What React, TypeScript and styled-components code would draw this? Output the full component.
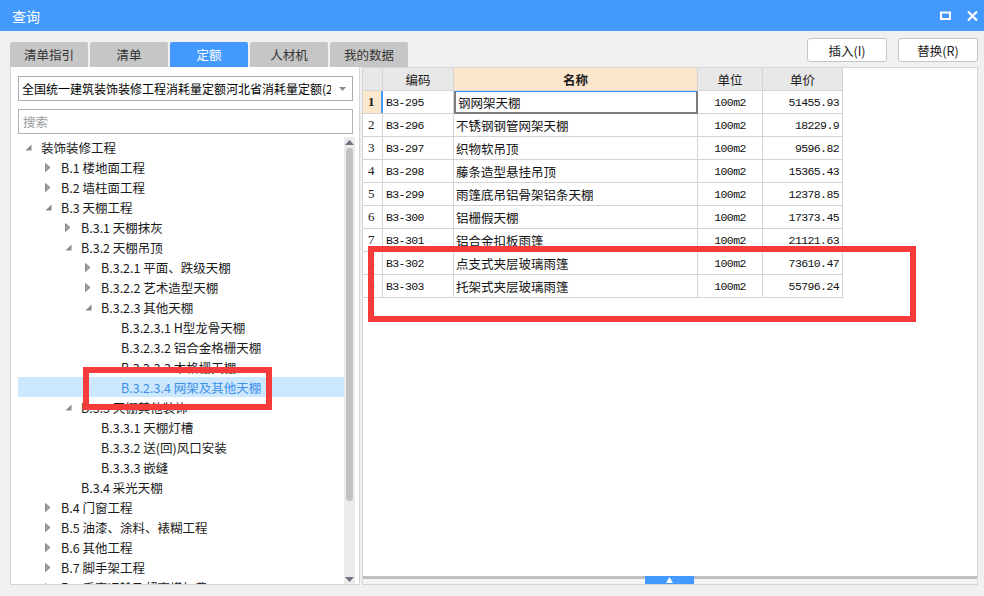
import React from 'react'
import styled, { createGlobalStyle } from 'styled-components'

const BLUE = '#4499ff'
const GRID = '#d4d4d4'
const UI_FONT = `'Noto Sans CJK SC', 'Noto Sans', sans-serif`
const CELL_FONT = `'Liberation Mono', 'Noto Sans CJK SC', monospace`

const GlobalStyle = createGlobalStyle`
  html, body {
    margin: 0;
    padding: 0;
    background: #f0f0f0;
  }
  * { box-sizing: border-box; }
`

const tabs = ['清单指引', '清单', '定额', '人材机', '我的数据']
const ACTIVE_TAB = 2

// level, label, state: 'open' | 'closed' | 'leaf'
const treeItems: [number, string, string][] = [
  [0, '装饰装修工程', 'open'],
  [1, 'B.1 楼地面工程', 'closed'],
  [1, 'B.2 墙柱面工程', 'closed'],
  [1, 'B.3 天棚工程', 'open'],
  [2, 'B.3.1 天棚抹灰', 'closed'],
  [2, 'B.3.2 天棚吊顶', 'open'],
  [3, 'B.3.2.1 平面、跌级天棚', 'closed'],
  [3, 'B.3.2.2 艺术造型天棚', 'closed'],
  [3, 'B.3.2.3 其他天棚', 'open'],
  [4, 'B.3.2.3.1 H型龙骨天棚', 'leaf'],
  [4, 'B.3.2.3.2 铝合金格栅天棚', 'leaf'],
  [4, 'B.3.2.3.3 木格栅天棚', 'leaf'],
  [4, 'B.3.2.3.4 网架及其他天棚', 'leaf'],
  [2, 'B.3.3 天棚其他装饰', 'open'],
  [3, 'B.3.3.1 天棚灯槽', 'leaf'],
  [3, 'B.3.3.2 送(回)风口安装', 'leaf'],
  [3, 'B.3.3.3 嵌缝', 'leaf'],
  [2, 'B.3.4 采光天棚', 'leaf'],
  [1, 'B.4 门窗工程', 'closed'],
  [1, 'B.5 油漆、涂料、裱糊工程', 'closed'],
  [1, 'B.6 其他工程', 'closed'],
  [1, 'B.7 脚手架工程', 'closed'],
  [1, 'B.8 垂直运输及超高增加费', 'closed'],
]
const SELECTED_TREE = 12

const rows = [
  ['B3-295', '钢网架天棚', '100m2', '51455.93'],
  ['B3-296', '不锈钢钢管网架天棚', '100m2', '18229.9'],
  ['B3-297', '织物软吊顶', '100m2', '9596.82'],
  ['B3-298', '藤条造型悬挂吊顶', '100m2', '15365.43'],
  ['B3-299', '雨篷底吊铝骨架铝条天棚', '100m2', '12378.85'],
  ['B3-300', '铝栅假天棚', '100m2', '17373.45'],
  ['B3-301', '铝合金扣板雨篷', '100m2', '21121.63'],
  ['B3-302', '点支式夹层玻璃雨篷', '100m2', '73610.47'],
  ['B3-303', '托架式夹层玻璃雨篷', '100m2', '55796.24'],
]

const COLS = '20px 71px 244px 65px 80px'

const Window = styled.div`
  position: relative;
  width: 984px;
  height: 596px;
  overflow: hidden;
  background: #f0f0f0;
  font-family: ${UI_FONT};
  font-size: 12px;
  color: #1a1a1a;
  display: flex;
  flex-direction: column;
`

const TitleBar = styled.div`
  height: 31px;
  flex: none;
  background: ${BLUE};
  color: #fff;
  display: flex;
  align-items: center;
  padding: 0 6px 0 12px;
  font-size: 14px;
`

const Title = styled.div`
  flex: 1;
`

const TitleIcons = styled.div`
  display: flex;
  align-items: center;
  gap: 16px;
`

const Body = styled.div`
  flex: none;
  height: 565px;
  display: flex;
  gap: 2px;
  padding: 0 6px 11px 10px;
`

const LeftColumn = styled.div`
  width: 350px;
  flex: none;
  display: flex;
  flex-direction: column;
  padding-top: 11px;
`

const TabRow = styled.div`
  display: flex;
  gap: 2px;
  height: 25px;
  flex: none;
  overflow: visible;
`

const Tab = styled.div<{ $active?: boolean }>`
  width: 78px;
  flex: none;
  display: flex;
  align-items: center;
  justify-content: center;
  border-radius: 2px 2px 0 0;
  background: ${p => (p.$active ? BLUE : '#c6c6c6')};
  color: ${p => (p.$active ? '#fff' : '#333')};
  font-size: 12.5px;
`

const LeftPanel = styled.div`
  flex: 1;
  background: #fff;
  border: 1px solid #d6d6d6;
  border-top: none;
  display: flex;
  flex-direction: column;
  min-height: 0;
`

const Fields = styled.div`
  padding: 9px 6px 0 7px;
  display: flex;
  flex-direction: column;
  gap: 8px;
`

const Select = styled.div`
  height: 25px;
  border: 1px solid #ababab;
  display: flex;
  align-items: center;
  padding: 0 6px 0 3px;
  gap: 8px;
  color: #000;
  font-size: 12px;
`

const SelectText = styled.div`
  flex: 1;
  white-space: nowrap;
  overflow: hidden;
`

const SearchBox = styled.div`
  height: 25px;
  border: 1px solid #b4b4b4;
  display: flex;
  align-items: center;
  padding: 0 4px;
  color: #9a9a9a;
  font-size: 12.5px;
`

const TreeArea = styled.div`
  flex: 1;
  display: flex;
  min-height: 0;
  padding: 3px 4px 0 7px;
`

const TreeList = styled.div`
  flex: 1;
  overflow: hidden;
`

const TreeRow = styled.div<{ $level: number; $selected?: boolean }>`
  height: 20px;
  display: flex;
  align-items: center;
  padding-left: ${p => 7 + p.$level * 20}px;
  background: ${p => (p.$selected ? '#cce8ff' : 'transparent')};
  color: ${p => (p.$selected ? '#3d8fe8' : '#1a1a1a')};
  white-space: nowrap;
  font-size: 12.5px;
`

const Toggle = styled.span`
  width: 16px;
  flex: none;
  display: flex;
  align-items: center;
`

const Scrollbar = styled.div`
  width: 11px;
  flex: none;
  background: #ececec;
  display: flex;
  flex-direction: column;
  align-items: center;
  padding: 3px 0 2px;
`

const ScrollThumb = styled.div`
  width: 7px;
  height: 353px;
  margin-top: 3px;
  border-radius: 4px;
  background: #c2c2c2;
`

const ScrollSpacer = styled.div`
  flex: 1;
`

const RightColumn = styled.div`
  flex: 1;
  display: flex;
  flex-direction: column;
  padding-top: 7px;
`

const ButtonRow = styled.div`
  height: 24px;
  flex: none;
  margin-bottom: 5px;
  display: flex;
  justify-content: flex-end;
  gap: 11px;
`

const Button = styled.div`
  width: 80px;
  border: 1px solid #c6c6c6;
  border-radius: 3px;
  background: #fff;
  display: flex;
  align-items: center;
  justify-content: center;
  color: #222;
  font-size: 12.5px;
`

const RightPanel = styled.div`
  flex: 1;
  background: #fff;
  border: 1px solid #d6d6d6;
  display: flex;
  flex-direction: column;
  min-height: 0;
`

const TableArea = styled.div`
  flex: 1;
`

const GridRow = styled.div`
  display: grid;
  grid-template-columns: ${COLS};
  width: 480px;
  height: 23px;
  border-bottom: 1px solid ${GRID};
`

const HeadCell = styled.div<{ $selected?: boolean }>`
  display: flex;
  align-items: center;
  justify-content: center;
  background: ${p => (p.$selected ? '#fde7cc' : '#e8e8e8')};
  font-weight: ${p => (p.$selected ? 'bold' : 'normal')};
  border-right: 1px solid ${GRID};
  font-size: 12.5px;
`

const RowHead = styled.div<{ $selected?: boolean }>`
  display: flex;
  align-items: center;
  padding-left: 5px;
  font-family: 'Liberation Serif', serif;
  font-size: 13px;
  background: ${p => (p.$selected ? '#fde7cc' : '#fff')};
  font-weight: ${p => (p.$selected ? 'bold' : 'normal')};
  border-right: ${p => (p.$selected ? `2px solid ${BLUE}` : `1px solid ${GRID}`)};
`

const Cell = styled.div<{ $align?: string; $focus?: boolean }>`
  display: flex;
  align-items: center;
  justify-content: ${p => p.$align || 'flex-start'};
  padding: 0 3px;
  font-family: ${CELL_FONT};
  font-size: 11.5px;
  letter-spacing: -0.6px;
  color: #111;
  white-space: nowrap;
  border-right: 1px solid ${GRID};
  ${p =>
    p.$focus &&
    `
    border: 2px solid #7c7c7c;
    border-top: 1px solid ${BLUE};
    margin-bottom: -1px;
  `}
`

const NameCell = styled(Cell)`
  font-family: ${UI_FONT};
  letter-spacing: 0;
  font-size: 12.5px;
  padding-left: 2px;
`

const BottomBar = styled.div`
  height: 8px;
  flex: none;
  border-top: 3px solid #c0c0c0;
  background: #f4f4f4;
  display: flex;
`

const SplitHandle = styled.div`
  width: 49px;
  height: 8px;
  margin: -3px 0 0 282px;
  background: ${BLUE};
  display: flex;
  align-items: center;
  justify-content: center;
`

// annotation marks drawn over the screenshot
const Mark = styled.div`
  position: absolute;
  border: 6px solid #f63b3b;
  pointer-events: none;
`

const Arrow = ({ state }: { state: string }) => {
  if (state === 'closed')
    return (
      <svg width="6" height="9" viewBox="0 0 6 9">
        <path d="M0.5 0.5 L5 4.5 L0.5 8.5 Z" fill="#a0a0a0" stroke="#7a7a7a" strokeWidth="0.8" />
      </svg>
    )
  if (state === 'open')
    return (
      <svg width="7" height="7" viewBox="0 0 7 7">
        <path d="M6.5 0.5 L6.5 6.5 L0.5 6.5 Z" fill="#8a8a8a" />
      </svg>
    )
  return null
}

const Caret = ({ up }: { up?: boolean }) => (
  <svg width="9" height="5" viewBox="0 0 9 5">
    <path d={up ? 'M0 5 L4.5 0 L9 5 Z' : 'M0 0 L9 0 L4.5 5 Z'} fill="#707080" />
  </svg>
)

export default function App() {
  return (
    <>
      <GlobalStyle />
      <Window>
        <TitleBar>
          <Title>查询</Title>
          <TitleIcons>
            <svg width="11" height="9" viewBox="0 0 11 9">
              <rect x="1" y="1.5" width="9" height="6.5" fill="none" stroke="#fff" strokeWidth="2" />
            </svg>
            <svg width="11" height="10" viewBox="0 0 11 10">
              <path d="M1 0.5 L10 9.5 M10 0.5 L1 9.5" stroke="#fff" strokeWidth="2.2" />
            </svg>
          </TitleIcons>
        </TitleBar>
        <Body>
          <LeftColumn>
            <TabRow>
              {tabs.map((t, i) => (
                <Tab key={t} $active={i === ACTIVE_TAB}>
                  {t}
                </Tab>
              ))}
            </TabRow>
            <LeftPanel>
              <Fields>
                <Select>
                  <SelectText>全国统一建筑装饰装修工程消耗量定额河北省消耗量定额(2012)</SelectText>
                  <svg width="7" height="4" viewBox="0 0 7 4">
                    <path d="M0 0 L7 0 L3.5 4 Z" fill="#8a8a8a" />
                  </svg>
                </Select>
                <SearchBox>搜索</SearchBox>
              </Fields>
              <TreeArea>
                <TreeList>
                  {treeItems.map(([level, label, state], i) => (
                    <TreeRow key={label} $level={level} $selected={i === SELECTED_TREE}>
                      <Toggle>
                        <Arrow state={state} />
                      </Toggle>
                      {label}
                    </TreeRow>
                  ))}
                </TreeList>
                <Scrollbar>
                  <Caret up />
                  <ScrollThumb />
                  <ScrollSpacer />
                  <Caret />
                </Scrollbar>
              </TreeArea>
            </LeftPanel>
          </LeftColumn>
          <RightColumn>
            <ButtonRow>
              <Button>插入(I)</Button>
              <Button>替换(R)</Button>
            </ButtonRow>
            <RightPanel>
              <TableArea>
                <GridRow>
                  <HeadCell />
                  <HeadCell>编码</HeadCell>
                  <HeadCell $selected>名称</HeadCell>
                  <HeadCell>单位</HeadCell>
                  <HeadCell>单价</HeadCell>
                </GridRow>
                {rows.map(([code, name, unit, price], i) => (
                  <GridRow key={code}>
                    <RowHead $selected={i === 0}>{i + 1}</RowHead>
                    <Cell>{code}</Cell>
                    <NameCell $focus={i === 0}>{name}</NameCell>
                    <Cell $align="center">{unit}</Cell>
                    <Cell $align="flex-end">{price}</Cell>
                  </GridRow>
                ))}
              </TableArea>
              <BottomBar>
                <SplitHandle>
                  <svg width="7" height="6" viewBox="0 0 7 6">
                    <path d="M0 6 L3.5 0 L7 6 Z" fill="#fff" />
                  </svg>
                </SplitHandle>
              </BottomBar>
            </RightPanel>
          </RightColumn>
        </Body>
        <Mark style={{ left: 83, top: 367, width: 189, height: 43 }} />
        <Mark style={{ left: 368, top: 246, width: 548, height: 76 }} />
      </Window>
    </>
  )
}
